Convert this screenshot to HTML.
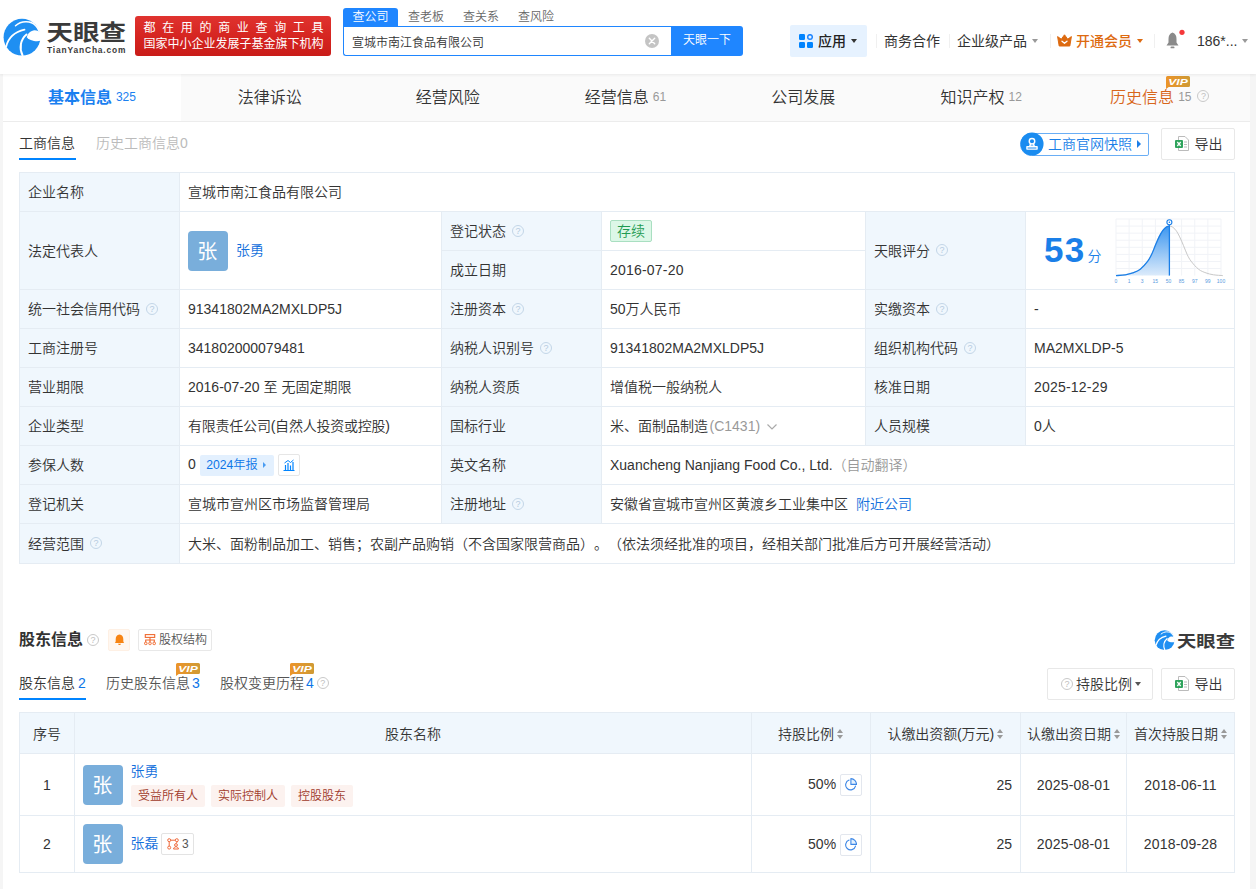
<!DOCTYPE html>
<html lang="zh-CN">
<head>
<meta charset="utf-8">
<title>宣城市南江食品有限公司 - 天眼查</title>
<style>
*{box-sizing:border-box;margin:0;padding:0}
html,body{width:1256px;height:889px;overflow:hidden}
body{font-weight:350;text-spacing-trim:space-all;background:#f5f5f5;font-family:"Liberation Sans","Noto Sans CJK SC",sans-serif;font-size:14px;color:#333;position:relative}
a{text-decoration:none;color:#1470dc}
.abs{position:absolute}
/* header */
#hd{position:absolute;left:0;top:0;width:1256px;height:74px;background:#fff;box-shadow:0 1px 3px rgba(0,0,0,.07);z-index:5}
#logo{position:absolute;left:3px;top:17px;width:126px;height:40px}
#banner{position:absolute;left:135px;top:16px;width:196px;height:40px;border-radius:3px;background:linear-gradient(180deg,#e0332f 0%,#d52420 55%,#c91c19 100%);color:#fff;font-size:12px;line-height:16px;padding:4px 0 0 8.5px;white-space:nowrap;font-weight:400}
#banner .l1{letter-spacing:6.67px;position:relative;top:.2px}
.stab{position:absolute;top:8px;height:19px;line-height:18px;font-size:12px;color:#666;text-align:center}
.stab.on{left:343px;width:55px;background:#1f86ff;color:#fff;border-radius:3px 3px 0 0}
#sinput{position:absolute;left:343px;top:26px;width:330px;height:30px;border:1px solid #1f86ff;border-right:none;border-radius:0 0 0 3px;background:#fff;font-size:12px;line-height:30px;padding:1px 0 0 8px;color:#333}
#sbtn{position:absolute;left:671px;top:26px;width:72px;height:30px;background:#1f86ff;color:#fff;font-size:12px;line-height:29px;text-align:center;border-radius:0 3px 3px 0}
.hn{position:absolute;top:25px;height:32px;line-height:32px;font-size:14px;font-weight:400;color:#333;white-space:nowrap}
.caret{display:inline-block;width:0;height:0;border-left:3.5px solid transparent;border-right:3.5px solid transparent;border-top:4px solid #999;vertical-align:middle;margin-left:5px;position:relative;top:-1px}
/* panel */
#panel{position:absolute;left:4px;top:74px;width:1246px;height:815px;background:#fff;box-shadow:-1px 0 0 #fff}
#nav{position:absolute;left:-1px;top:0;width:1247px;height:48px;background:#fafafa;border-bottom:1px solid #ececec}
.nt{position:absolute;top:0;height:47px;line-height:48px;width:178px;text-align:center;font-size:16px;color:#333;white-space:nowrap}
.nt .c{font-size:12px;color:#999;margin-left:4px;position:relative;top:-2px}
.nt.on{background:#fff;color:#1a80f0;height:47px;font-weight:700}
.nt.on .c{color:#1a80f0;font-weight:400}

/* sub tabs */
.sub{position:absolute;font-size:14px;line-height:20px;white-space:nowrap}
.ul{position:absolute;height:2px;background:#0084ff}
.btn{position:absolute;border:1px solid #e8e8e8;border-radius:2px;background:#fff;font-size:14px;color:#333;white-space:nowrap}
/* info table */
table{border-collapse:collapse;table-layout:fixed}
#t1{position:absolute;left:15px;top:98px;width:1215px}
#t1 td{border:1px solid #e5ecf3;height:39px;padding:0 0 0 8px;font-size:14px;color:#333;white-space:nowrap;vertical-align:middle;line-height:20px}
#t1 td.k{background:#f0f7fd}
#t1 td.k .q{border-color:#c3d6e8;color:#b5cbe0;top:-1.5px}
.q{display:inline-block;width:12px;height:12px;border:1px solid #c9c9c9;border-radius:50%;font-size:9px;line-height:10px;text-align:center;color:#c0c0c0;vertical-align:middle;margin-left:6px;position:relative;top:-1px;font-family:"Liberation Sans",sans-serif}
.ava{display:inline-block;width:40px;height:40px;border-radius:4px;background:#79aedb;color:#fff;font-size:20px;font-weight:400;line-height:43.500px;overflow:hidden;text-indent:-1.500px;text-align:center;vertical-align:middle}
.q.abs{position:absolute}
.g{color:#999}

/* shareholders */
#t2{position:absolute;left:15px;top:638px;width:1215px}
#t2 th{background:#f0f7fd;border:1px solid #e5ecf3;height:41px;font-weight:inherit;font-size:14px;color:#333;white-space:nowrap;text-align:center}
#t2 td{border:1px solid #e5ecf3;font-size:14px;color:#333;white-space:nowrap;vertical-align:middle;text-align:center;position:relative}
.sort{display:inline-block;width:6px;height:10px;vertical-align:middle;margin-left:3px;position:relative;top:-1px}
.sort:before,.sort:after{content:"";position:absolute;left:0;border-left:3px solid transparent;border-right:3px solid transparent}
.sort:before{top:0;border-bottom:4px solid #999}
.sort:after{bottom:0;border-top:4px solid #999}
.tag{display:inline-block;height:22px;line-height:22px;padding:0 7px;background:#fcf2ef;color:#a03a2b;font-size:12px;border-radius:2px;margin-right:6px}
.pie{display:inline-block;width:22px;height:22px;border:1px solid #e3e7ee;border-radius:2px;vertical-align:middle;margin-left:3.500px;position:relative;top:.5px}
.vip{position:absolute;width:24px;height:13px}
</style>
</head>
<body>
<div id="hd">
  <div id="logo">
    <svg width="126" height="40" viewBox="0 0 126 40">
      <circle cx="19" cy="20.200" r="18.400" fill="#1f8ff2"/>
      <path d="M23.800 20.300 C24.800 16.300 28 13.600 31.500 13.300 C34 13.300 36.500 14.300 38 16 L38 23.600 C36 24.200 33.500 24.300 31 23.900 C27.500 23.300 25 22.300 23.800 20.300Z" fill="#fff"/>
      <path d="M12.500 8.700 C18 3.500 28 3.200 32.500 8.500 C34.500 10.500 35.500 12.500 36.200 14.200" fill="none" stroke="#fff" stroke-width="1.500" stroke-linecap="round"/>
      <path d="M3.200 29.500 C5 22 11 15 21.500 12.600" fill="none" stroke="#fff" stroke-width="1.800" stroke-linecap="round"/>
      <path d="M19.500 38.300 C16 31 17.500 22.500 23.500 17.500" fill="none" stroke="#fff" stroke-width="2" stroke-linecap="round"/>
      <text x="43.500" y="23" font-family="'Liberation Sans','Noto Sans CJK SC',sans-serif" font-size="21.500" font-weight="700" fill="#3a3a3a" textLength="79.500" lengthAdjust="spacingAndGlyphs">天眼查</text>
      <text x="44" y="35.900" font-family="'Liberation Sans',sans-serif" font-size="8.400" font-weight="700" fill="#3a3a3a" textLength="78.500" lengthAdjust="spacing">TianYanCha.com</text>
    </svg>
  </div>
  <div id="banner"><div class="l1">都在用的商业查询工具</div><div>国家中小企业发展子基金旗下机构</div></div>
  <div class="stab on">查公司</div>
  <div class="stab" style="left:408px;width:36px">查老板</div>
  <div class="stab" style="left:463px;width:36px">查关系</div>
  <div class="stab" style="left:518px;width:36px">查风险</div>
  <div id="sinput">宣城市南江食品有限公司
    <svg class="abs" style="left:300px;top:6px" width="16" height="16" viewBox="0 0 16 16"><circle cx="8" cy="8" r="7" fill="#c4c4c4"/><path d="M5.300 5.300 L10.700 10.700 M10.700 5.300 L5.300 10.700" stroke="#fff" stroke-width="1.400" stroke-linecap="round"/></svg>
  </div>
  <div id="sbtn">天眼一下</div>
  <div class="hn" style="left:790px;width:77px;background:#e6f2ff;border-radius:2px;padding-left:28px;color:#222;font-weight:500">
    <svg class="abs" style="left:9px;top:9px" width="14" height="14" viewBox="0 0 14 14"><rect x="0" y="0" width="6" height="6" rx="1.200" fill="#0084ff"/><circle cx="11" cy="3" r="2.300" fill="none" stroke="#1f86ff" stroke-width="1.500"/><rect x="0" y="8" width="6" height="6" rx="1.200" fill="#0084ff"/><rect x="8" y="8" width="6" height="6" rx="1.200" fill="#0084ff"/></svg>应用<span class="caret" style="border-top-color:#333"></span></div>
  <div class="abs" style="left:876px;top:34px;width:1px;height:14px;background:#f0f0f0"></div><div class="abs" style="left:949px;top:34px;width:1px;height:14px;background:#f0f0f0"></div><div class="abs" style="left:1050px;top:34px;width:1px;height:14px;background:#f0f0f0"></div><div class="abs" style="left:1154px;top:34px;width:1px;height:14px;background:#f0f0f0"></div>
  <div class="hn" style="left:884px">商务合作</div>
  <div class="hn" style="left:957px">企业级产品<span class="caret"></span></div>
  <div class="hn" style="left:1057px;color:#dd6a10;font-weight:500;padding-left:19px">
    <svg class="abs" style="left:0;top:9px" width="15" height="13" viewBox="0 0 15 13"><path d="M.6 2.600 L4.300 5.200 L7.500 .8 L10.700 5.200 L14.400 2.600 L12.800 12 L2.200 12Z" fill="#dd6a10" stroke="#dd6a10" stroke-width="1" stroke-linejoin="round"/><path d="M5 7.200 L7.500 9.300 L10 7.200" fill="none" stroke="#fff" stroke-width="1.300" stroke-linecap="round" stroke-linejoin="round"/></svg>开通会员<span class="caret" style="border-top-color:#dd6a10"></span></div>
  <svg class="abs" style="left:1164px;top:28px" width="22" height="24" viewBox="0 0 22 24"><path d="M8.500 4.500 C5.500 5.500 4.500 8 4.500 11 L4.500 14.500 L2.500 17.500 L14.500 17.500 L12.500 14.500 L12.500 11 C12.500 8 11.500 5.500 8.500 4.500Z" fill="#8a8a8a"/><rect x="6.500" y="18.500" width="4" height="1.800" rx=".9" fill="#8a8a8a"/><circle cx="18" cy="4.300" r="2.600" fill="#f5383a"/></svg>
  <div class="hn" style="left:1197px">186*...<span class="caret"></span></div>
</div>

<div id="panel">
  <div id="nav">
    <div class="nt on" style="left:0.00px;width:177.86px">基本信息<span class="c">325</span></div>
    <div class="nt" style="left:177.86px;width:177.86px">法律诉讼</div>
    <div class="nt" style="left:355.71px;width:177.86px">经营风险</div>
    <div class="nt" style="left:533.57px;width:177.86px">经营信息<span class="c">61</span></div>
    <div class="nt" style="left:711.43px;width:177.86px">公司发展</div>
    <div class="nt" style="left:889.29px;width:177.86px">知识产权<span class="c">12</span></div>
    <div class="nt" style="left:1067.14px;width:177.86px;color:#d8661a;padding-left:1.5px">历史信息<span class="c">15</span><span class="q" style="margin-left:6px;top:-3px">?</span></div>
    <svg class="vip" style="left:1163.2px;top:1.9px" viewBox="0 0 24 13"><defs><linearGradient id="gv" x1="0" y1="0" x2="1" y2="0"><stop offset="0" stop-color="#ec942a"/><stop offset="1" stop-color="#cf9a34"/></linearGradient></defs><path d="M1.500 0 H22.500 Q24 0 24 1.500 V9.500 Q24 11 22.500 11 H2.800 L0 13 V1.500 Q0 0 1.500 0Z" fill="url(#gv)"/><text x="2.300" y="9.300" font-size="9.600" font-weight="700" font-style="italic" fill="#fff" textLength="19.500" lengthAdjust="spacingAndGlyphs" font-family="'Liberation Sans',sans-serif">VIP</text></svg>
  </div>

  <div class="sub" style="left:15px;top:59px;color:#333">工商信息</div>
  <div class="ul" style="left:15px;top:83.500px;width:57px;height:2.500px"></div>
  <div class="sub" style="left:92px;top:59px;color:#bbb">历史工商信息0</div>
  <div class="btn" style="left:1016px;top:58.500px;width:128.500px;height:23px;border-color:#6aaef5;color:#1a7fe8;line-height:21px;padding-left:27px;border-radius:12px 2px 2px 12px">
    <svg class="abs" style="left:-1px;top:-1.500px" width="24" height="24" viewBox="0 0 26 26"><circle cx="13" cy="13" r="12.500" fill="#1a8cf0"/><circle cx="13" cy="10" r="3" fill="none" stroke="#fff" stroke-width="1.500"/><path d="M11.500 12.500 L10.500 15.500 L15.500 15.500 L14.500 12.500" fill="none" stroke="#fff" stroke-width="1.500"/><path d="M7.500 18.500 L7.500 16 L18.500 16 L18.500 18.500Z" fill="none" stroke="#fff" stroke-width="1.500" stroke-linejoin="round"/></svg>工商官网快照<span style="display:inline-block;width:0;height:0;border-top:4px solid transparent;border-bottom:4px solid transparent;border-left:4px solid #1a7fe8;margin-left:4.500px;vertical-align:middle;position:relative;top:-1px"></span></div>
  <div class="btn" style="left:1157px;top:54px;width:74px;height:32px;line-height:30px;padding-left:32.500px">
    <svg class="abs" style="left:12.500px;top:7px" width="14" height="15" viewBox="0 0 14 15"><path d="M3.500 .5 L10 .5 L13.500 4 L13.500 14.500 L3.500 14.500Z" fill="#fff" stroke="#bbb" stroke-width="1"/><path d="M9 6 h3 M9 8.500 h3 M9 11 h3" stroke="#bbb" stroke-width="1"/><rect x="0" y="4" width="8" height="8" rx="1" fill="#2fa35c"/><path d="M2.300 6 L5.700 10 M5.700 6 L2.300 10" stroke="#fff" stroke-width="1.200"/></svg>导出</div>

  <table id="t1">
    <colgroup><col style="width:160px"><col style="width:262px"><col style="width:160px"><col style="width:264px"><col style="width:160px"><col style="width:209px"></colgroup>
    <tr><td class="k">企业名称</td><td colspan="5">宣城市南江食品有限公司</td></tr>
    <tr><td class="k" rowspan="2">法定代表人</td><td rowspan="2"><span class="ava">张</span><a style="margin-left:8px;position:relative;top:1px">张勇</a></td><td class="k">登记状态<span class="q">?</span></td><td><span style="display:inline-block;height:22px;line-height:20px;padding:0 6px;border:1px solid #a9dfc1;background:#dcf7e7;color:#1f9b52;border-radius:2px">存续</span></td><td class="k" rowspan="2">天眼评分<span class="q">?</span></td><td rowspan="2" style="position:relative"><span class="abs" style="left:18px;top:18px;font-size:35px;line-height:40px;font-weight:700;color:#1a7fe8;font-family:'Liberation Sans',sans-serif;letter-spacing:1.2px">53</span><span class="abs" style="left:61.5px;top:34px;font-size:14px;line-height:20px;color:#1a7fe8">分</span><svg class="abs" style="left:88px;top:4.500px" width="112" height="70" viewBox="0 0 112 70"><defs><linearGradient id="ga" x1="0" y1="0" x2="0" y2="1"><stop offset="0" stop-color="#3d97f0"/><stop offset="1" stop-color="#dcebfb"/></linearGradient></defs><path d="M2.00 2 V58.6" stroke="#f1f3f7" stroke-width="1"/><path d="M15.12 2 V58.6" stroke="#f1f3f7" stroke-width="1"/><path d="M28.25 2 V58.6" stroke="#f1f3f7" stroke-width="1"/><path d="M41.38 2 V58.6" stroke="#f1f3f7" stroke-width="1"/><path d="M54.50 2 V58.6" stroke="#f1f3f7" stroke-width="1"/><path d="M67.62 2 V58.6" stroke="#f1f3f7" stroke-width="1"/><path d="M80.75 2 V58.6" stroke="#f1f3f7" stroke-width="1"/><path d="M93.88 2 V58.6" stroke="#f1f3f7" stroke-width="1"/><path d="M107.00 2 V58.6" stroke="#f1f3f7" stroke-width="1"/><path d="M2 2.00 H107" stroke="#f1f3f7" stroke-width="1"/><path d="M2 9.07 H107" stroke="#f1f3f7" stroke-width="1"/><path d="M2 16.15 H107" stroke="#f1f3f7" stroke-width="1"/><path d="M2 23.23 H107" stroke="#f1f3f7" stroke-width="1"/><path d="M2 30.30 H107" stroke="#f1f3f7" stroke-width="1"/><path d="M2 37.38 H107" stroke="#f1f3f7" stroke-width="1"/><path d="M2 44.45 H107" stroke="#f1f3f7" stroke-width="1"/><path d="M2 51.52 H107" stroke="#f1f3f7" stroke-width="1"/><path d="M2.00 58.60 C3.55 58.47 8.50 58.25 11.30 57.80 C14.10 57.35 16.30 56.83 18.80 55.90 C21.30 54.97 23.80 54.17 26.30 52.20 C28.80 50.23 31.92 46.55 33.80 44.10 C35.68 41.65 36.35 40.08 37.60 37.50 C38.85 34.92 40.05 31.53 41.30 28.60 C42.55 25.67 43.83 22.45 45.10 19.90 C46.37 17.35 47.65 14.97 48.90 13.30 C50.15 11.63 51.52 10.60 52.60 9.90 C53.68 9.20 54.47 9.10 55.40 9.10 C56.33 9.10 57.12 9.20 58.20 9.90 C59.28 10.60 60.65 11.63 61.90 13.30 C63.15 14.97 64.43 17.35 65.70 19.90 C66.97 22.45 68.25 25.67 69.50 28.60 C70.75 31.53 71.95 34.92 73.20 37.50 C74.45 40.08 75.12 41.65 77.00 44.10 C78.88 46.55 82.00 50.23 84.50 52.20 C87.00 54.17 89.50 54.97 92.00 55.90 C94.50 56.83 96.70 57.35 99.50 57.80 C102.30 58.25 107.25 58.47 108.80 58.60" fill="none" stroke="#c8c8c8" stroke-width="1"/><path d="M2.00 58.60 C3.55 58.47 8.50 58.25 11.30 57.80 C14.10 57.35 16.30 56.83 18.80 55.90 C21.30 54.97 23.80 54.17 26.30 52.20 C28.80 50.23 31.92 46.55 33.80 44.10 C35.68 41.65 36.35 40.08 37.60 37.50 C38.85 34.92 40.05 31.53 41.30 28.60 C42.55 25.67 43.83 22.45 45.10 19.90 C46.37 17.35 47.65 14.97 48.90 13.30 C50.15 11.63 51.52 10.60 52.60 9.90 C53.68 9.20 54.47 9.10 55.40 9.10 L55.4 58.6 L2 58.6Z" fill="url(#ga)"/><path d="M2.00 58.60 C3.55 58.47 8.50 58.25 11.30 57.80 C14.10 57.35 16.30 56.83 18.80 55.90 C21.30 54.97 23.80 54.17 26.30 52.20 C28.80 50.23 31.92 46.55 33.80 44.10 C35.68 41.65 36.35 40.08 37.60 37.50 C38.85 34.92 40.05 31.53 41.30 28.60 C42.55 25.67 43.83 22.45 45.10 19.90 C46.37 17.35 47.65 14.97 48.90 13.30 C50.15 11.63 51.52 10.60 52.60 9.90 C53.68 9.20 54.47 9.10 55.40 9.10" fill="none" stroke="#1a7fe8" stroke-width="1.300"/><path d="M55.4 6 V58.6" stroke="#1a7fe8" stroke-width="1.300"/><circle cx="55.4" cy="5.200" r="2.500" fill="#fff" stroke="#1a7fe8" stroke-width="1.100"/><circle cx="55.4" cy="5.200" r=".8" fill="#1a7fe8"/><text x="2.00" y="65.800" font-size="5" fill="#5a9be0" text-anchor="middle" font-family="'Liberation Sans',sans-serif">0</text><text x="15.12" y="65.800" font-size="5" fill="#5a9be0" text-anchor="middle" font-family="'Liberation Sans',sans-serif">1</text><text x="28.25" y="65.800" font-size="5" fill="#5a9be0" text-anchor="middle" font-family="'Liberation Sans',sans-serif">3</text><text x="41.38" y="65.800" font-size="5" fill="#5a9be0" text-anchor="middle" font-family="'Liberation Sans',sans-serif">15</text><text x="54.50" y="65.800" font-size="5" fill="#5a9be0" text-anchor="middle" font-family="'Liberation Sans',sans-serif">50</text><text x="67.62" y="65.800" font-size="5" fill="#5a9be0" text-anchor="middle" font-family="'Liberation Sans',sans-serif">85</text><text x="80.75" y="65.800" font-size="5" fill="#5a9be0" text-anchor="middle" font-family="'Liberation Sans',sans-serif">97</text><text x="93.88" y="65.800" font-size="5" fill="#5a9be0" text-anchor="middle" font-family="'Liberation Sans',sans-serif">99</text><text x="107.00" y="65.800" font-size="5" fill="#5a9be0" text-anchor="middle" font-family="'Liberation Sans',sans-serif">100</text></svg></td></tr>
    <tr><td class="k">成立日期</td><td style="letter-spacing:.2px">2016-07-20</td></tr>
    <tr><td class="k">统一社会信用代码<span class="q">?</span></td><td>91341802MA2MXLDP5J</td><td class="k">注册资本<span class="q">?</span></td><td>50万人民币</td><td class="k">实缴资本<span class="q">?</span></td><td>-</td></tr>
    <tr><td class="k">工商注册号</td><td>341802000079481</td><td class="k">纳税人识别号<span class="q">?</span></td><td>91341802MA2MXLDP5J</td><td class="k">组织机构代码<span class="q">?</span></td><td>MA2MXLDP-5</td></tr>
    <tr><td class="k">营业期限</td><td>2016-07-20 至 无固定期限</td><td class="k">纳税人资质</td><td>增值税一般纳税人</td><td class="k">核准日期</td><td style="letter-spacing:.2px">2025-12-29</td></tr>
    <tr><td class="k">企业类型</td><td style="letter-spacing:-.22px">有限责任公司(自然人投资或控股)</td><td class="k">国标行业</td><td>米、面制品制造<span class="g" style="margin-left:1.500px">(C1431)</span><svg width="10" height="6" viewBox="0 0 10 6" style="margin-left:7px;vertical-align:middle"><path d="M.5 .5 L5 5 L9.500 .5" fill="none" stroke="#aaa" stroke-width="1.200"/></svg></td><td class="k">人员规模</td><td>0人</td></tr>
    <tr><td class="k">参保人数</td><td>0 <span style="display:inline-block;width:73.500px;height:21px;line-height:21px;background:#e3f0fe;color:#0d76e8;font-size:12.200px;padding:0 0 0 6px;border-radius:2px;vertical-align:middle;margin-left:0.500px;position:relative;top:.5px">2024年报<span style="display:inline-block;width:0;height:0;border-top:3px solid transparent;border-bottom:3px solid transparent;border-left:3.5px solid #4a9cf2;margin-left:5px;vertical-align:middle;position:relative;top:-1px"></span></span><span style="display:inline-block;width:22px;height:22px;border:1px solid #e6e6e6;border-radius:2px;vertical-align:middle;margin-left:4.500px;position:relative"><svg class="abs" style="left:4px;top:4px" width="12" height="12" viewBox="0 0 12 12"><path d="M.5 11.500 h11" stroke="#0084ff" stroke-width="1"/><path d="M2.500 11 V6 M5 11 V4 M7.500 11 V6.500 M10 11 V3" stroke="#0084ff" stroke-width="1.200"/><path d="M1.500 4 L5 1.500 L7.500 3.500 L10.500 1" fill="none" stroke="#0084ff" stroke-width="1"/></svg></span></td><td class="k">英文名称</td><td colspan="3">Xuancheng Nanjiang Food Co., Ltd.<span class="g">（自动翻译）</span></td></tr>
    <tr><td class="k">登记机关</td><td>宣城市宣州区市场监督管理局</td><td class="k">注册地址<span class="q">?</span></td><td colspan="3">安徽省宣城市宣州区黄渡乡工业集中区<a style="margin-left:8px">附近公司</a></td></tr>
    <tr><td class="k" style="height:40px">经营范围<span class="q">?</span></td><td colspan="5">大米、面粉制品加工、销售；农副产品购销（不含国家限营商品）。（依法须经批准的项目，经相关部门批准后方可开展经营活动）</td></tr>
  </table>

  <div class="abs" style="left:15px;top:554px;font-size:16px;line-height:24px;font-weight:700;color:#333;white-space:nowrap">股东信息</div>
  <span class="q abs" style="left:83px;top:560px;margin:0">?</span>
  <div class="btn" style="left:104px;top:555px;width:22px;height:22px;border-color:#fef0e4;background:#fff7f0">
    <svg class="abs" style="left:4.500px;top:4px" width="11" height="12" viewBox="0 0 11 12"><path d="M5.500 .6 C2.800 .9 1.700 3 1.700 5.200 V7.300 C1.700 8 1.200 8.500 .8 9 H10.200 C9.800 8.500 9.300 8 9.300 7.300 V5.200 C9.300 3 8.200 .9 5.500 .6Z" fill="#f78413"/><path d="M4 9.800 H7 C6.800 10.700 6.200 11.100 5.500 11.100 C4.800 11.100 4.200 10.700 4 9.800Z" fill="#f78413"/></svg></div>
  <div class="btn" style="left:134px;top:555px;width:74px;height:22px;line-height:20px;font-size:12px;padding-left:20px;color:#555">
    <svg class="abs" style="left:5px;top:4.200px" width="12" height="12" viewBox="0 0 12 12"><rect x="1.300" y=".6" width="9.400" height="2.800" fill="none" stroke="#f06a30" stroke-width="1.100"/><path d="M6 3.400 V8 M1.700 8 V6 H10.300 V8" fill="none" stroke="#f06a30" stroke-width="1.100"/><rect x=".6" y="8.200" width="2.400" height="2.400" rx=".8" fill="none" stroke="#f06a30" stroke-width="1"/><rect x="4.800" y="8.200" width="2.400" height="2.400" rx=".8" fill="none" stroke="#f06a30" stroke-width="1"/><rect x="9" y="8.200" width="2.400" height="2.400" rx=".8" fill="none" stroke="#f06a30" stroke-width="1"/></svg>股权结构</div>
  <svg class="abs" style="left:1150px;top:555px" width="84" height="22" viewBox="0 0 84 22">
    <g transform="translate(.38 .33) scale(.538)">
      <circle cx="19" cy="20.200" r="18.400" fill="#1f8ff2"/>
      <path d="M23.800 20.300 C24.800 16.300 28 13.600 31.500 13.300 C34 13.300 36.500 14.300 38 16 L38 23.600 C36 24.200 33.500 24.300 31 23.900 C27.500 23.300 25 22.300 23.800 20.300Z" fill="#fff"/>
      <path d="M12.500 8.700 C18 3.500 28 3.200 32.500 8.500 C34.500 10.500 35.500 12.500 36.200 14.200" fill="none" stroke="#fff" stroke-width="1.800" stroke-linecap="round"/>
      <path d="M3.200 29.500 C5 22 11 15 21.500 12.600" fill="none" stroke="#fff" stroke-width="2.200" stroke-linecap="round"/>
      <path d="M19.500 38.300 C16 31 17.500 22.500 23.500 17.500" fill="none" stroke="#fff" stroke-width="2.400" stroke-linecap="round"/>
    </g>
    <text x="23" y="17.900" font-family="'Liberation Sans','Noto Sans CJK SC',sans-serif" font-size="16" font-weight="700" fill="#3a3a3a" textLength="58" lengthAdjust="spacingAndGlyphs">天眼查</text>
  </svg>

  <div class="sub" style="left:15px;top:599px;color:#333">股东信息 <span style="color:#0d76e8;margin-left:-1px">2</span></div>
  <div class="ul" style="left:15px;top:624px;width:67px"></div>
  <div class="sub" style="left:102px;top:599px;color:#555">历史股东信息 <span style="color:#0d76e8;margin-left:-2px">3</span></div>
  <svg class="vip" style="left:172.300px;top:588.500px" viewBox="0 0 24 13"><defs><linearGradient id="gv" x1="0" y1="0" x2="1" y2="0"><stop offset="0" stop-color="#ec942a"/><stop offset="1" stop-color="#cf9a34"/></linearGradient></defs><path d="M1.500 0 H22.500 Q24 0 24 1.500 V9.500 Q24 11 22.500 11 H2.800 L0 13 V1.500 Q0 0 1.500 0Z" fill="url(#gv)"/><text x="2.300" y="9.300" font-size="9.600" font-weight="700" font-style="italic" fill="#fff" textLength="19.500" lengthAdjust="spacingAndGlyphs" font-family="'Liberation Sans',sans-serif">VIP</text></svg>
  <div class="sub" style="left:216px;top:599px;color:#555">股权变更历程 <span style="color:#0d76e8;margin-left:-2px">4</span><span class="q" style="margin-left:3px">?</span></div>
  <svg class="vip" style="left:286.300px;top:588.500px" viewBox="0 0 24 13"><defs><linearGradient id="gv" x1="0" y1="0" x2="1" y2="0"><stop offset="0" stop-color="#ec942a"/><stop offset="1" stop-color="#cf9a34"/></linearGradient></defs><path d="M1.500 0 H22.500 Q24 0 24 1.500 V9.500 Q24 11 22.500 11 H2.800 L0 13 V1.500 Q0 0 1.500 0Z" fill="url(#gv)"/><text x="2.300" y="9.300" font-size="9.600" font-weight="700" font-style="italic" fill="#fff" textLength="19.500" lengthAdjust="spacingAndGlyphs" font-family="'Liberation Sans',sans-serif">VIP</text></svg>
  <div class="btn" style="left:1043px;top:594px;width:106px;height:32px;line-height:30px;padding-left:28px"><span class="q abs" style="left:13px;top:9px;margin:0">?</span>持股比例<span class="caret" style="margin-left:3px;border-top-color:#555"></span></div>
  <div class="btn" style="left:1157px;top:594px;width:74px;height:32px;line-height:30px;padding-left:32.500px"><svg class="abs" style="left:12.500px;top:7px" width="14" height="15" viewBox="0 0 14 15"><path d="M3.500 .5 L10 .5 L13.500 4 L13.500 14.500 L3.500 14.500Z" fill="#fff" stroke="#bbb" stroke-width="1"/><path d="M9 6 h3 M9 8.500 h3 M9 11 h3" stroke="#bbb" stroke-width="1"/><rect x="0" y="4" width="8" height="8" rx="1" fill="#2fa35c"/><path d="M2.300 6 L5.700 10 M5.700 6 L2.300 10" stroke="#fff" stroke-width="1.200"/></svg>导出</div>

  <table id="t2">
    <colgroup><col style="width:55px"><col style="width:677px"><col style="width:119px"><col style="width:150px"><col style="width:106px"><col style="width:108px"></colgroup>
    <tr><th>序号</th><th>股东名称</th><th style="text-align:right;padding-right:27px">持股比例<span class="sort"></span></th><th style="text-align:right;padding-right:17px;letter-spacing:-.1px">认缴出资额(万元)<span class="sort"></span></th><th>认缴出资日期<span class="sort"></span></th><th>首次持股日期<span class="sort"></span></th></tr>
    <tr style="height:62px"><td>1</td><td style="text-align:left"><span class="ava abs" style="left:8px;top:11px">张</span><a class="abs" style="left:55.500px;top:7px;line-height:20px">张勇</a><div class="abs" style="left:56px;top:31px"><span class="tag">受益所有人</span><span class="tag">实际控制人</span><span class="tag">控股股东</span></div></td><td style="text-align:right;padding-right:8px"><span style="position:relative;top:1px;letter-spacing:.2px">50%</span><span class="pie"><svg class="abs" style="left:3.800px;top:3.200px" width="12" height="13" viewBox="0 0 12 13"><path d="M4.100 2.100 A5 5 0 1 0 10.500 8.100" fill="none" stroke="#3d87e6" stroke-width="1.100" stroke-linecap="round"/><path d="M5.900 6.400 V.6 A5.600 5.800 0 0 1 11.500 6.400Z" fill="#e3f1fe" stroke="#3d87e6" stroke-width="1.100" stroke-linejoin="round"/></svg></span></td><td style="text-align:right;padding-right:8px">25</td><td style="letter-spacing:.2px">2025-08-01</td><td style="letter-spacing:.2px">2018-06-11</td></tr>
    <tr style="height:57px"><td>2</td><td style="text-align:left"><span class="ava abs" style="left:8px;top:8px">张</span><a class="abs" style="left:55.500px;top:16.500px;line-height:20px">张磊</a><span class="abs" style="left:86px;top:17px;width:33px;height:22px;border:1px solid #e3e3e3;border-radius:2px;font-size:12px;line-height:20px;padding-left:20px;color:#555"><svg class="abs" style="left:4.500px;top:4px" width="12" height="12" viewBox="0 0 12 12"><g fill="none" stroke="#ef6a3c" stroke-width="1"><circle cx="2.200" cy="2.200" r="1.500"/><circle cx="9.800" cy="2.200" r="1.500"/><circle cx="2.200" cy="9.600" r="1.500"/><path d="M3.700 2.200 H8.300 M2.200 3.700 V8.100 M9.800 3.700 V5"/><circle cx="9" cy="7" r="1.400"/><path d="M6.500 11 C7 9.200 8 8.800 9 8.800 C10 8.800 11 9.200 11.500 11Z"/></g></svg>3</span></td><td style="text-align:right;padding-right:8px"><span style="position:relative;top:1px;letter-spacing:.2px">50%</span><span class="pie"><svg class="abs" style="left:3.800px;top:3.200px" width="12" height="13" viewBox="0 0 12 13"><path d="M4.100 2.100 A5 5 0 1 0 10.500 8.100" fill="none" stroke="#3d87e6" stroke-width="1.100" stroke-linecap="round"/><path d="M5.900 6.400 V.6 A5.600 5.800 0 0 1 11.500 6.400Z" fill="#e3f1fe" stroke="#3d87e6" stroke-width="1.100" stroke-linejoin="round"/></svg></span></td><td style="text-align:right;padding-right:8px">25</td><td style="letter-spacing:.2px">2025-08-01</td><td style="letter-spacing:.2px">2018-09-28</td></tr>
  </table>


</div>
</body>
</html>
